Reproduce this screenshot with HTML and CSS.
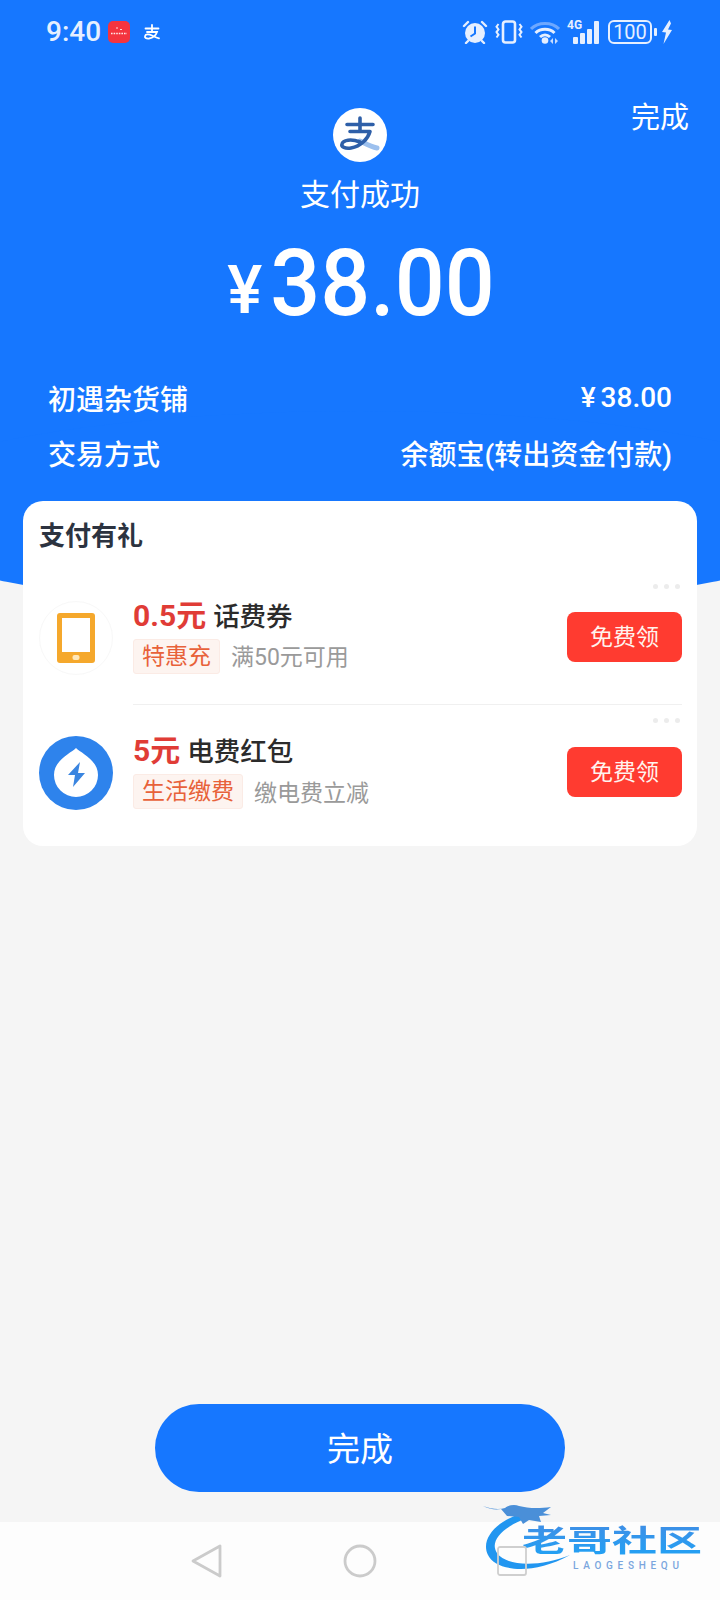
FILE: index.html
```html
<!DOCTYPE html>
<html lang="zh-CN">
<head>
<meta charset="utf-8">
<title>支付成功</title>
<link rel="stylesheet" href="styles.css">
</head>
<body>
<div class="page">
  <header class="hero">
    <div class="status">
      <span class="clock">9:40</span>
      <svg class="app-red" viewBox="0 0 22 22" width="22" height="22">
        <rect width="22" height="22" rx="5" fill="#f4343f"/>
        <path d="M8 7h2M12 8.500h2" stroke="#ffd9d9" stroke-width="1"/>
        <path d="M3 12.500h16" stroke="#ffe9e9" stroke-width="1.400" stroke-dasharray="1.600 1"/>
      </svg>
      <svg class="app-pay" viewBox="0 0 18 16" width="18" height="16">
        <path d="M2.500 4.500h13M9 1v6.500M4 8h10c-1 3-4 6-8 6.500C3 14.800 1.500 13.500 2 12c.6-2 4-2 7-.5 2 1 4 2.300 7 2.800" fill="none" stroke="#fff" stroke-width="1.800" stroke-linecap="round"/>
      </svg>
      <div class="status-right">
        <svg viewBox="0 0 26 24" width="26" height="24">
          <circle cx="13" cy="13" r="10" fill="#e6efff"/>
          <path d="M13 6.500v7l-4.500 3" fill="none" stroke="#1677ff" stroke-width="2"/>
          <path d="M2 6l4-4M24 6l-4-4M6 21l-2 2M20 21l2 2" stroke="#e6efff" stroke-width="2.400" stroke-linecap="round"/>
        </svg>
        <svg viewBox="0 0 28 24" width="28" height="24">
          <rect x="8" y="1.500" width="12" height="21" rx="2.500" fill="none" stroke="#e6efff" stroke-width="2.600"/>
          <path d="M3.500 4l-2 2.700 2 2.700-2 2.700 2 2.700-2 2.700M24.500 4l2 2.700-2 2.700 2 2.700-2 2.700 2 2.700" fill="none" stroke="#e6efff" stroke-width="2"/>
        </svg>
        <svg viewBox="0 0 30 24" width="30" height="24">
          <path d="M1 9C8 1.500 22 1.500 29 9" fill="none" stroke="#6ea8ff" stroke-width="3"/>
          <path d="M5.500 13C10.500 8 19.500 8 24.500 13M10 17c3-2.800 7-2.800 10 0" fill="none" stroke="#e6efff" stroke-width="3"/>
          <circle cx="15" cy="20.500" r="3.300" fill="#e6efff"/>
          <path d="M23 18l-3 3 3 3zM25 18l3 3-3 3z" fill="#c6dcff"/>
        </svg>
        <div class="signal">
          <span class="net">4G</span>
          <i class="bar b1"></i><i class="bar b2"></i><i class="bar b3"></i><i class="bar b4"></i>
        </div>
        <div class="battery"><span class="battery-level">100</span><i class="battery-nub"></i></div>
        <svg viewBox="0 0 12 24" width="12" height="24">
          <path d="M8.500 0L1 12l4 .500L2.500 24 11 10l-4-.500 3-6z" fill="#e6efff"/>
        </svg>
      </div>
    </div>

    <div class="topline">
      <span></span>
      <svg class="logo" viewBox="0 0 54 54" width="54" height="54">
        <circle cx="27" cy="27" r="27" fill="#fff"/>
        <path d="M27 33c4 1.500 9 5.500 17 7" fill="none" stroke="#9cc0ee" stroke-width="5" stroke-linecap="round"/>
        <path d="M14 16.500h26M27 10v13M17 23.500h20c-2 7-9 15-19 16.500-6 .8-10-1-9-4 1-4 9-5.500 18-2" fill="none" stroke="#2e5fa8" stroke-width="3.600" stroke-linecap="round" stroke-linejoin="round"/>
      </svg>
      <a class="done-link">完成</a>
    </div>
    <h1 class="pay-title">支付成功</h1>
    <div class="amount"><span class="yen">¥</span><span class="digits">38.00</span></div>

    <dl class="facts">
      <div class="fact"><dt>初遇杂货铺</dt><dd><span class="fact-yen">¥</span>38.00</dd></div>
      <div class="fact"><dt>交易方式</dt><dd>余额宝(转出资金付款)</dd></div>
    </dl>
  </header>

  <section class="card">
    <h2 class="card-title">支付有礼</h2>

    <article class="offer">
      <div class="offer-icon outlined">
        <svg viewBox="0 0 38 50" width="38" height="50">
          <rect width="38" height="50" rx="3" fill="#f5a82c"/>
          <rect x="5" y="5" width="28" height="34" fill="#fff"/>
          <rect x="15.500" y="42" width="7" height="5" rx="2" fill="#ffe7b8"/>
        </svg>
      </div>
      <div class="offer-body">
        <div class="offer-text">
          <p class="offer-title"><strong class="price">0.5元</strong><span class="name">话费券</span></p>
          <p class="offer-meta"><span class="tag">特惠充</span><span class="note">满50元可用</span></p>
        </div>
        <button class="claim">免费领</button>
        <span class="dots"><i></i><i></i><i></i></span>
      </div>
    </article>

    <article class="offer second">
      <div class="offer-icon">
        <svg viewBox="0 0 74 74" width="74" height="74">
          <circle cx="37" cy="37" r="37" fill="#2e83ec"/>
          <path d="M37 12C42 17 59 24 59 39A22 22 0 0 1 15 39C15 24 32 17 37 12z" fill="#fff"/>
          <path d="M41 26L29 39h7L34 51 46 37h-7z" fill="#3a85e0"/>
        </svg>
      </div>
      <div class="offer-body last">
        <div class="offer-text">
          <p class="offer-title"><strong class="price">5元</strong><span class="name">电费红包</span></p>
          <p class="offer-meta"><span class="tag">生活缴费</span><span class="note">缴电费立减</span></p>
        </div>
        <button class="claim">免费领</button>
        <span class="dots"><i></i><i></i><i></i></span>
      </div>
    </article>
  </section>

  <div class="spacer"></div>
  <button class="finish">完成</button>

  <nav class="nav-bar">
    <svg class="nav-key" viewBox="0 0 40 36" width="40" height="36">
      <path d="M33 3v30L6 18z" fill="none" stroke="#cbcbcb" stroke-width="2.800" stroke-linejoin="round"/>
    </svg>
    <svg class="nav-key" viewBox="0 0 40 36" width="40" height="36">
      <circle cx="20" cy="18" r="15" fill="none" stroke="#cbcbcb" stroke-width="2.800"/>
    </svg>
    <svg class="nav-key" viewBox="0 0 40 36" width="40" height="36">
      <rect x="5" y="4" width="28" height="28" rx="2" fill="none" stroke="#cfcfcf" stroke-width="1.800"/>
    </svg>
  </nav>

  <div class="brand-mark">
    <svg class="brand-dragon" viewBox="0 0 90 72" width="90" height="72">
      <path d="M37 11C14 18-3 36 5 52c7 15 42 22 82 0C58 64 24 64 14 50 6 38 20 24 42 16z" fill="#2196f0"/>
      <path d="M0 3c8 3 16 4 22 2 3-3 10-4 14-2 8 2 18 3 32 1l-8 6 8 2-12 1 2 6-12-2-6 4-4-7-12-1-6-7C12 7 6 6 0 3z" fill="#4a8fd8"/>
    </svg>
    <span class="brand-name">老哥社区</span>
    <span class="brand-sub">LAOGESHEQU</span>
  </div>
</div>
</body>
</html>
```
FILE: styles.css
```css
* { box-sizing: border-box; }

html, body { margin: 0; padding: 0; }

body {
  font-family: Roboto, "Noto Sans CJK SC", sans-serif;
  color: #333;
}

p, h1, h2, dl, dd { margin: 0; }

.page {
  position: relative;
  width: 720px;
  height: 1600px;
  display: flex;
  flex-direction: column;
  overflow: hidden;
  background: #f5f5f5;
}

/* Blue header with its shallow curved lower edge */
.hero {
  position: relative;
  height: 501px;
  background: #1677ff;
  color: #fff;
}

.hero::after {
  content: "";
  position: absolute;
  left: -140px;
  top: 411px;
  width: 1000px;
  height: 200px;
  border-radius: 50%;
  background: #1677ff;
}

.status {
  display: flex;
  align-items: center;
  height: 64px;
  padding: 0 47px 0 46px;
  color: #e6efff;
}

.clock {
  width: 62px;
  font-size: 28px;
  line-height: 32px;
  font-weight: 500;
}

.app-pay { margin-left: 13px; }

.status-right {
  display: flex;
  align-items: center;
  margin-left: auto;
  gap: 7px;
}

.signal {
  position: relative;
  display: flex;
  align-items: flex-end;
  gap: 2px;
  width: 34px;
  height: 24px;
  padding-left: 6px;
}

.net {
  position: absolute;
  left: 0;
  top: -1px;
  font-size: 12px;
  line-height: 12px;
  font-weight: 700;
}

.bar {
  width: 5px;
  border-radius: 1px;
  background: #e6efff;
}
.b1 { height: 7px; }
.b2 { height: 11px; }
.b3 { height: 15px; }
.b4 { height: 23px; }

.battery {
  position: relative;
  width: 44px;
  height: 24px;
  margin-right: 2px;
  border: 2px solid #e6efff;
  border-radius: 6px;
  text-align: center;
}

.battery-level {
  display: block;
  font-size: 20px;
  line-height: 20px;
}

.battery-nub {
  position: absolute;
  right: -7px;
  top: 6px;
  width: 3px;
  height: 8px;
  border-radius: 1px;
  background: #e6efff;
}

.topline {
  display: grid;
  grid-template-columns: 1fr 54px 1fr;
  height: 54px;
  margin-top: 44px;
  padding: 0 31px;
}

.logo { display: block; }

.done-link {
  justify-self: end;
  margin-top: -10px;
  font-size: 29px;
  line-height: 40px;
}

.pay-title {
  margin-top: 12px;
  font-size: 30px;
  line-height: 42px;
  font-weight: 400;
  text-align: center;
}

.amount {
  display: flex;
  justify-content: center;
  align-items: baseline;
  height: 100px;
  margin-top: 17px;
  padding-left: 2px;
  line-height: 100px;
}

.yen {
  margin-right: 8px;
  font-size: 66px;
  font-weight: 500;
}

.digits {
  display: inline-block;
  font-size: 88px;
  font-weight: 500;
  letter-spacing: 0;
  transform: scaleY(1.06);
}

.facts {
  position: relative;
  z-index: 1;
  margin-top: 37px;
  padding: 0 48px;
}

.fact {
  display: flex;
  justify-content: space-between;
  align-items: center;
  height: 55px;
  font-size: 28px;
  font-weight: 500;
}

.fact-yen { margin-right: 5px; }

/* Offers card */
.card {
  position: relative;
  z-index: 1;
  height: 345px;
  margin: 0 23px;
  padding: 0 15px 0 16px;
  border-radius: 20px;
  background: #fff;
}

.card-title {
  height: 69px;
  font-size: 26px;
  line-height: 70px;
  font-weight: 700;
  color: #2c3340;
}

.offer {
  display: flex;
  align-items: center;
  gap: 20px;
  height: 135px;
}

.offer-icon {
  flex: none;
  display: flex;
  align-items: center;
  justify-content: center;
  width: 74px;
  height: 74px;
  border-radius: 50%;
}

.offer-icon.outlined { border: 1px solid #f8f8f8; }

.offer-body {
  position: relative;
  flex: 1;
  align-self: stretch;
  display: flex;
  align-items: center;
  justify-content: space-between;
  border-bottom: 1px solid #f0f0f0;
}

.offer-body.last { border-bottom: 0; }

.offer-text { margin-top: -3px; }

.offer-title {
  display: flex;
  align-items: baseline;
  gap: 7px;
  height: 38px;
  line-height: 36px;
}

.price {
  font-size: 30px;
  font-weight: 700;
  color: #e03c36;
}

.name {
  font-size: 26.500px;
  font-weight: 500;
  color: #2b2b2b;
}

.offer-meta {
  display: flex;
  align-items: center;
  gap: 11px;
  height: 35px;
  margin-top: 3px;
}

.tag {
  height: 35px;
  padding: 0 8px;
  border: 1px solid #fbebe5;
  border-radius: 3px;
  background: #fdf4f0;
  font-size: 23px;
  line-height: 33px;
  color: #e8623a;
}

.note {
  margin-bottom: 2px;
  font-size: 23px;
  color: #9a9a9a;
}

.claim {
  flex: none;
  width: 115px;
  height: 50px;
  padding: 0 0 4px;
  border: 0;
  border-radius: 8px;
  background: #ff3b30;
  font-family: inherit;
  font-size: 23px;
  color: #fff3ee;
}

.second .claim { margin-top: -2px; }

.dots {
  position: absolute;
  top: 14px;
  right: 2px;
  display: flex;
  gap: 6px;
}

.second .dots { top: 13px; }

.dots i {
  width: 5px;
  height: 5px;
  border-radius: 50%;
  background: #ececec;
}

.spacer { flex: 1; }

.finish {
  align-self: center;
  width: 410px;
  height: 88px;
  margin-bottom: 30px;
  padding: 0 0 2px;
  border: 0;
  border-radius: 44px;
  background: #1677ff;
  font-family: inherit;
  font-size: 33px;
  color: #fff;
}

.nav-bar {
  display: flex;
  align-items: center;
  justify-content: center;
  gap: 113px;
  height: 78px;
  background: #fdfdfd;
}

.nav-key {
  position: relative;
  z-index: 2;
}

/* Community watermark in the bottom corner */
.brand-mark {
  position: absolute;
  left: 483px;
  top: 1503px;
  width: 225px;
  height: 76px;
}

.brand-dragon {
  position: absolute;
  left: 0;
  top: 0;
}

.brand-name {
  position: absolute;
  left: 39px;
  top: 21px;
  font-family: "Liberation Sans", "Noto Sans CJK SC", sans-serif;
  font-size: 30px;
  line-height: 34px;
  font-weight: 700;
  white-space: nowrap;
  transform: scaleX(1.5);
  transform-origin: left center;
  background: linear-gradient(#3f8fe6, #1fa2f5);
  -webkit-background-clip: text;
  background-clip: text;
  color: transparent;
}

.brand-sub {
  position: absolute;
  left: 90px;
  top: 57px;
  font-size: 10px;
  line-height: 11px;
  font-weight: 500;
  letter-spacing: 4.700px;
  color: #7aa6dd;
  white-space: nowrap;
}
```
